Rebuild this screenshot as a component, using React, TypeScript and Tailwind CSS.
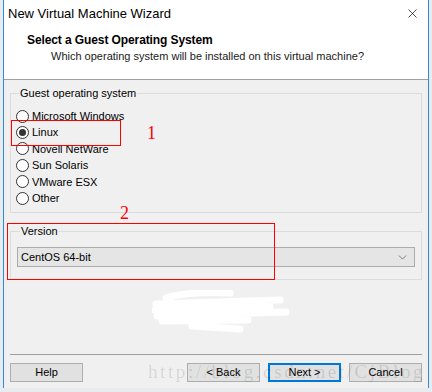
import { ChevronDown, X } from "lucide-react";

const OS_LIST = [
  "Microsoft Windows",
  "Linux",
  "Novell NetWare",
  "Sun Solaris",
  "VMware ESX",
  "Other",
];

function Radio({ checked }: { checked: boolean }) {
  return (
    <span className="flex h-[13px] w-[13px] shrink-0 items-center justify-center rounded-full border border-[#333] bg-white">
      {checked && <span className="block h-[7px] w-[7px] rounded-full bg-[#333]" />}
    </span>
  );
}

function Button({ label, focused }: { label: string; focused?: boolean }) {
  return (
    <button
      className={`flex h-[19px] w-[73px] items-center justify-center bg-[#e1e1e1] text-[11px] text-black ${
        focused ? "border-2 border-[#0078d7]" : "border border-[#adadad]"
      }`}
    >
      {label}
    </button>
  );
}

export default function App() {
  return (
    <div
      className="relative flex h-[392px] w-[432px] flex-col overflow-hidden bg-[#e8ecef]"
      style={{ fontFamily: '"Liberation Sans", Arial, sans-serif' }}
    >
      <div className="ml-[3px] flex h-[388px] w-[426px] flex-col border-x border-[#2b8be0] bg-[#f0f0f0]">
        {/* Title bar */}
        <div className="flex h-[26px] items-center justify-between bg-white pl-[4px] pr-[8px]">
          <span className="text-[13px] leading-none text-black">New Virtual Machine Wizard</span>
          <X size={15} strokeWidth={1.1} className="text-black" />
        </div>

        {/* Header */}
        <div className="flex h-[54px] flex-col border-b border-[#a0a0a0] bg-white pl-[23px] pt-[6px]">
          <span className="text-[12px] font-bold leading-[16px] tracking-[-0.1px] text-black">
            Select a Guest Operating System
          </span>
          <span className="pl-[24px] text-[11px] leading-[16px] text-[#1a1a1a]">
            Which operating system will be installed on this virtual machine?
          </span>
        </div>

        {/* Body */}
        <div className="flex flex-1 flex-col px-[6px] pt-[6px]">
          <fieldset className="h-[127px] border border-[#dcdcdc] px-[5px] pt-[8px]">
            <legend className="ml-[3px] px-[1px] text-[11px] leading-[14px] text-black">
              Guest operating system
            </legend>
            <div className="flex flex-col">
              {OS_LIST.map((os) => (
                <label key={os} className="flex h-[16.4px] items-center gap-[3px] text-[11px] text-black">
                  <Radio checked={os === "Linux"} />
                  {os}
                </label>
              ))}
            </div>
          </fieldset>

          <fieldset className="mt-[11px] h-[56px] border border-[#dcdcdc] px-[6px]">
            <legend className="ml-[3px] px-[1px] text-[11px] leading-[14px] text-black">Version</legend>
            <div className="mt-[9px] flex h-[20px] items-center justify-between border border-[#adadad] bg-[#e5e5e5] pl-[3px] pr-[5px] text-[11px] text-black">
              CentOS 64-bit
              <ChevronDown size={13} strokeWidth={1.1} className="text-[#333]" />
            </div>
          </fieldset>

          {/* Scribble */}
          <div className="flex h-[74px] items-start pl-[142px] pt-[10px]">
            <svg width="140" height="44" viewBox="0 0 140 44">
              <g stroke="#ffffff" strokeWidth="7" strokeLinecap="round" fill="none">
                <path d="M14 8 C30 3 55 2 78 3" />
                <path d="M4 14 L128 10" />
                <path d="M2 20 L118 17" />
                <path d="M5 26 L134 22" />
                <path d="M10 31 L96 30" />
                <path d="M40 36 L88 39" />
              </g>
            </svg>
          </div>

          <div className="border-t border-[#a0a0a0]" />
          <div className="relative flex items-center pt-[8px]">
            <Button label="Help" />
            <div className="ml-auto flex gap-[8px]">
              <Button label="< Back" />
              <Button label="Next >" focused />
              <Button label="Cancel" />
            </div>
            <span
              className="pointer-events-none absolute left-[138px] top-[3px] text-[19px] tracking-[2.6px] text-black/[0.12]"
              style={{ fontFamily: '"Liberation Serif", serif' }}
            >
              http://blog.csdn.net/CjBlog
            </span>
          </div>
        </div>
      </div>

      {/* Annotations */}
      <div className="absolute left-[11px] top-[120px] h-[26px] w-[110px] border border-[#ff0000]" />
      <span
        className="absolute left-[147px] top-[124px] text-[18px] leading-none text-[#ff0000]"
        style={{ fontFamily: '"Liberation Serif", serif' }}
      >
        1
      </span>
      <span
        className="absolute left-[120px] top-[204px] text-[18px] leading-none text-[#ff0000]"
        style={{ fontFamily: '"Liberation Serif", serif' }}
      >
        2
      </span>
      <div className="absolute left-[7px] top-[223px] h-[57px] w-[268px] border border-[#ff0000]" />
    </div>
  );
}
